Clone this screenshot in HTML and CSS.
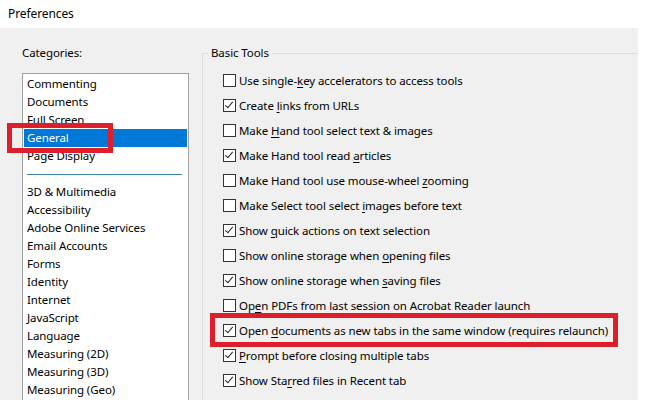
FILE: index.html
```html
<!DOCTYPE html>
<html>
<head>
<meta charset="utf-8">
<link rel="stylesheet" href="styles.css">
</head>
<body>
<div class="window">
  <div class="titlebar">Preferences</div>
  <div class="content">
    <div class="left">
      <div class="cat-label">Categories:</div>
      <div class="listbox">
        <div class="item">Commenting</div>
        <div class="item">Documents</div>
        <div class="item">Full Screen</div>
        <div class="item selected">General</div>
        <div class="item">Page Display</div>
        <div class="sep"></div>
        <div class="item">3D &amp; Multimedia</div>
        <div class="item">Accessibility</div>
        <div class="item">Adobe Online Services</div>
        <div class="item">Email Accounts</div>
        <div class="item">Forms</div>
        <div class="item">Identity</div>
        <div class="item">Internet</div>
        <div class="item">JavaScript</div>
        <div class="item">Language</div>
        <div class="item">Measuring (2D)</div>
        <div class="item">Measuring (3D)</div>
        <div class="item">Measuring (Geo)</div>
      </div>
    </div>
    <div class="right">
      <div class="group">
        <div class="legend">Basic Tools</div>
        <div class="row"><span class="cb"></span><span>Use single-<u>k</u>ey accelerators to access tools</span></div>
        <div class="row"><span class="cb on"></span><span>Create <u>l</u>inks from URLs</span></div>
        <div class="row"><span class="cb"></span><span>Make <u>H</u>and tool select text &amp; images</span></div>
        <div class="row"><span class="cb on"></span><span>Make Hand tool read <u>a</u>rticles</span></div>
        <div class="row"><span class="cb"></span><span>Make Hand tool use mouse-wheel <u>z</u>ooming</span></div>
        <div class="row"><span class="cb"></span><span>Make Select tool select <u>i</u>mages before text</span></div>
        <div class="row"><span class="cb on"></span><span>Show <u>q</u>uick actions on text selection</span></div>
        <div class="row"><span class="cb"></span><span>Show online storage when <u>o</u>pening files</span></div>
        <div class="row"><span class="cb on"></span><span>Show online storage when <u>s</u>aving files</span></div>
        <div class="row"><span class="cb"></span><span>Op<u>e</u>n PDFs from last session on Acrobat Reader launch</span></div>
        <div class="row"><span class="cb on"></span><span>Open <u>d</u>ocuments as new tabs in the same window (requires relaunch)</span></div>
        <div class="row"><span class="cb on"></span><span><u>P</u>rompt before closing multiple tabs</span></div>
        <div class="row"><span class="cb on"></span><span>Show Sta<u>r</u>red files in Recent tab</span></div>
      </div>
    </div>
    <div class="mark mark-general"></div>
    <div class="mark mark-tabs"></div>
  </div>
</div>
</body>
</html>
```

FILE: styles.css
```css
html, body {
  margin: 0;
  padding: 0;
  background: #ffffff;
}
body {
  font-family: "Noto Sans", "Open Sans", sans-serif;
  font-size: 11.5px;
  letter-spacing: -0.1px;
  color: #000;
  width: 652px;
  height: 412px;
  overflow: hidden;
}
.titlebar {
  height: 28px;
  line-height: 28px;
  padding-left: 8px;
  font-size: 12px;
}
.content {
  position: relative;
  width: 638px;
  height: 372px;
  background: #f0f0f0;
  display: flex;
  overflow: hidden;
}
.left {
  width: 202px;
  padding-left: 22px;
  box-sizing: border-box;
}
.cat-label {
  margin-top: 16px;
  height: 18px;
  line-height: 18px;
  margin-bottom: 11px;
}
.listbox {
  width: 167px;
  height: 340px;
  box-sizing: border-box;
  background: #fff;
  border: 1px solid #a0a0a0;
  border-bottom: none;
  padding: 1px 1px 0 1px;
  overflow: hidden;
}
.item {
  height: 18px;
  line-height: 18px;
  padding-left: 3px;
  white-space: nowrap;
}
.item.selected {
  background: #0078d7;
  color: #fff;
}
.sep {
  height: 18px;
  display: flex;
  align-items: center;
  padding: 0 3px 0 3px;
}
.sep::before {
  content: "";
  display: block;
  flex: 1;
  height: 1px;
  margin-right: 2px;
  background: #3a87ab;
}
.right {
  flex: 1;
  padding-top: 25px;
}
.group {
  position: relative;
  height: 400px;
  border-top: 1px solid #dcdcdc;
  border-left: 1px solid #dcdcdc;
  padding-left: 20px;
  padding-top: 14px;
}
.legend {
  position: absolute;
  top: -10px;
  left: 5px;
  padding: 0 3px;
  background: #f0f0f0;
  line-height: 18px;
}
.row {
  height: 25px;
  display: flex;
  align-items: center;
  white-space: nowrap;
}
.row u {
  text-decoration-thickness: 1px;
  text-underline-offset: 2px;
}
.cb {
  width: 13px;
  height: 13px;
  box-sizing: border-box;
  border: 1px solid #333;
  background: #fff;
  margin-right: 3px;
  flex: none;
  position: relative;
}
.cb.on::after {
  content: "";
  position: absolute;
  left: 3px;
  top: 0px;
  width: 3px;
  height: 7px;
  border-right: 1px solid #222;
  border-bottom: 1px solid #222;
  transform: rotate(40deg);
}
.mark {
  position: absolute;
  border: 5px solid #dc1f2b;
  box-sizing: border-box;
}
.mark-general {
  left: 7px;
  top: 95px;
  width: 106px;
  height: 30px;
}
.mark-tabs {
  left: 210px;
  top: 285px;
  width: 408px;
  height: 34px;
}
```
